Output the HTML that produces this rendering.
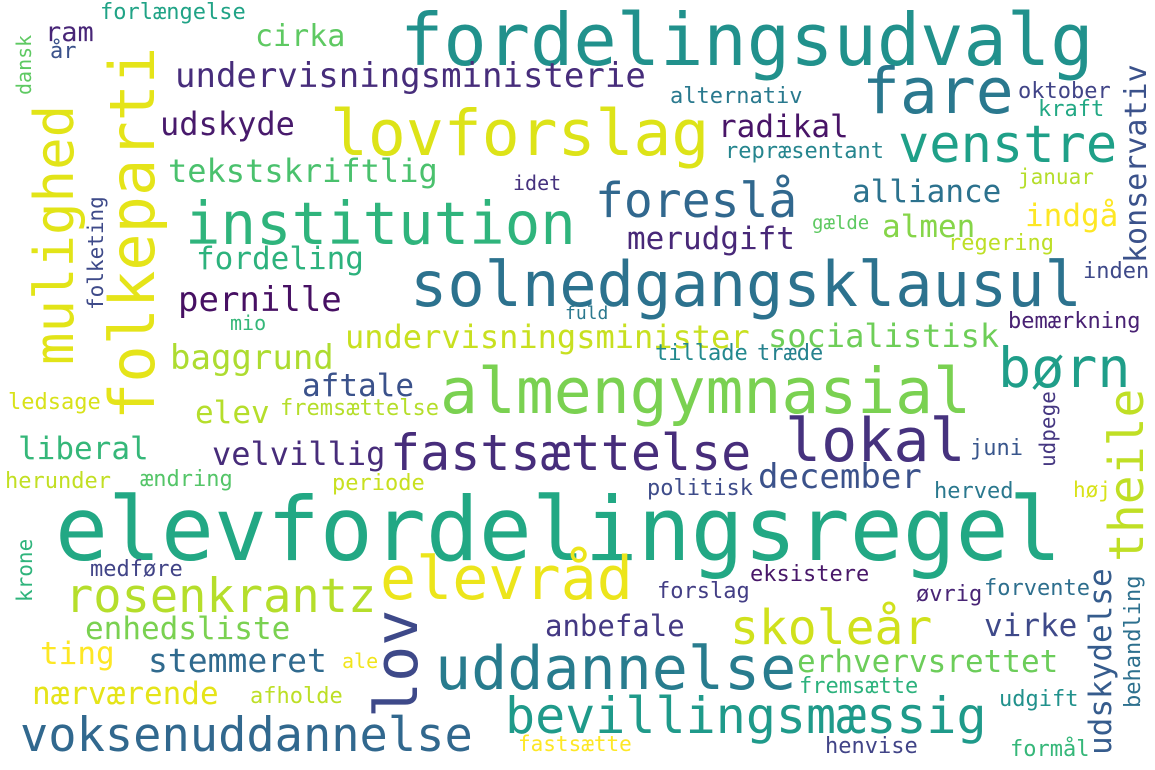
<!DOCTYPE html>
<html><head><meta charset="utf-8"><style>
html,body{margin:0;padding:0;background:#fff}
#c{position:relative;width:1155px;height:770px;overflow:hidden;background:#fff;font-family:"DejaVu Sans Mono","Liberation Mono",monospace}
#c span{position:absolute;line-height:1;white-space:nowrap}
#c span.v{transform:rotate(-90deg);transform-origin:0 0}
</style></head><body><div id="c">
<span style="left:400px;top:4px;font-size:72px;color:#21918c">fordelingsudvalg</span>
<span style="left:862px;top:60px;font-size:63px;color:#2a788e">fare</span>
<span style="left:330px;top:102px;font-size:63px;color:#dde318">lovforslag</span>
<span style="left:185px;top:194px;font-size:59px;color:#2fb47c">institution</span>
<span style="left:410px;top:254px;font-size:62px;color:#2c728e">solnedgangsklausul</span>
<span style="left:440px;top:360px;font-size:63px;color:#7ad151">almengymnasial</span>
<span style="left:785px;top:411px;font-size:60px;color:#46327e">lokal</span>
<span style="left:390px;top:428px;font-size:50px;color:#472d7b">fastsættelse</span>
<span style="left:55px;top:486px;font-size:88px;color:#22a884">elevfordelingsregel</span>
<span style="left:380px;top:549px;font-size:60px;color:#ece51b">elevråd</span>
<span style="left:100px;top:2px;font-size:22px;color:#20a386">forlængelse</span>
<span style="left:45px;top:19px;font-size:27px;color:#482677">ram</span>
<span style="left:50px;top:41px;font-size:22px;color:#3b528b">år</span>
<span style="left:255px;top:22px;font-size:30px;color:#5ec962">cirka</span>
<span style="left:175px;top:59px;font-size:34px;color:#472d7b">undervisningsministerie</span>
<span style="left:160px;top:108px;font-size:32px;color:#481a6c">udskyde</span>
<span style="left:168px;top:155px;font-size:32px;color:#4ac16d">tekstskriftlig</span>
<span style="left:513px;top:173px;font-size:20px;color:#46327e">idet</span>
<span style="left:196px;top:244px;font-size:31px;color:#2db27d">fordeling</span>
<span style="left:178px;top:283px;font-size:34px;color:#471063">pernille</span>
<span style="left:230px;top:313px;font-size:20px;color:#35b779">mio</span>
<span style="left:565px;top:305px;font-size:18px;color:#2a788e">fuld</span>
<span style="left:345px;top:321px;font-size:32px;color:#c8e020">undervisningsminister</span>
<span style="left:170px;top:341px;font-size:34px;color:#addc30">baggrund</span>
<span style="left:768px;top:320px;font-size:32px;color:#6ece58">socialistisk</span>
<span style="left:655px;top:343px;font-size:22px;color:#23898e">tillade</span>
<span style="left:757px;top:343px;font-size:22px;color:#26828e">træde</span>
<span style="left:718px;top:112px;font-size:31px;color:#481467">radikal</span>
<span style="left:725px;top:141px;font-size:22px;color:#25858e">repræsentant</span>
<span style="left:670px;top:86px;font-size:22px;color:#29798e">alternativ</span>
<span style="left:1018px;top:81px;font-size:22px;color:#414487">oktober</span>
<span style="left:1038px;top:99px;font-size:22px;color:#22a884">kraft</span>
<span style="left:898px;top:119px;font-size:52px;color:#1fa088">venstre</span>
<span style="left:595px;top:177px;font-size:48px;color:#31688e">foreslå</span>
<span style="left:852px;top:177px;font-size:31px;color:#2c728e">alliance</span>
<span style="left:1018px;top:167px;font-size:21px;color:#b5de2b">januar</span>
<span style="left:1025px;top:201px;font-size:31px;color:#fde725">indgå</span>
<span style="left:812px;top:214px;font-size:19px;color:#5ec962">gælde</span>
<span style="left:882px;top:212px;font-size:31px;color:#86d549">almen</span>
<span style="left:627px;top:224px;font-size:31px;color:#482878">merudgift</span>
<span style="left:948px;top:233px;font-size:22px;color:#bddf26">regering</span>
<span style="left:1083px;top:261px;font-size:22px;color:#3e4989">inden</span>
<span style="left:1008px;top:311px;font-size:22px;color:#482173">bemærkning</span>
<span style="left:998px;top:341px;font-size:55px;color:#1f9e89">børn</span>
<span style="left:8px;top:392px;font-size:22px;color:#d8e219">ledsage</span>
<span style="left:195px;top:398px;font-size:31px;color:#b5de2b">elev</span>
<span style="left:280px;top:398px;font-size:22px;color:#b5de2b">fremsættelse</span>
<span style="left:302px;top:371px;font-size:31px;color:#3b528b">aftale</span>
<span style="left:18px;top:434px;font-size:31px;color:#35b779">liberal</span>
<span style="left:212px;top:438px;font-size:32px;color:#472c7a">velvillig</span>
<span style="left:5px;top:471px;font-size:22px;color:#c2df23">herunder</span>
<span style="left:140px;top:469px;font-size:22px;color:#54c568">ændring</span>
<span style="left:332px;top:473px;font-size:22px;color:#c8e020">periode</span>
<span style="left:90px;top:559px;font-size:22px;color:#414487">medføre</span>
<span style="left:65px;top:573px;font-size:47px;color:#b5de2b">rosenkrantz</span>
<span style="left:85px;top:614px;font-size:31px;color:#7ad151">enhedsliste</span>
<span style="left:40px;top:639px;font-size:31px;color:#fde725">ting</span>
<span style="left:148px;top:644px;font-size:33px;color:#306a8e">stemmeret</span>
<span style="left:342px;top:651px;font-size:20px;color:#f1e51d">ale</span>
<span style="left:32px;top:679px;font-size:31px;color:#e5e419">nærværende</span>
<span style="left:250px;top:686px;font-size:22px;color:#bddf26">afholde</span>
<span style="left:20px;top:712px;font-size:47px;color:#31688e">voksenuddannelse</span>
<span style="left:435px;top:639px;font-size:60px;color:#287c8e">uddannelse</span>
<span style="left:505px;top:691px;font-size:50px;color:#1f9a8a">bevillingsmæssig</span>
<span style="left:518px;top:734px;font-size:21px;color:#fde725">fastsætte</span>
<span style="left:730px;top:604px;font-size:48px;color:#d0e11c">skoleår</span>
<span style="left:545px;top:612px;font-size:29px;color:#443983">anbefale</span>
<span style="left:657px;top:581px;font-size:22px;color:#433e85">forslag</span>
<span style="left:750px;top:564px;font-size:22px;color:#481769">eksistere</span>
<span style="left:647px;top:478px;font-size:22px;color:#3e4c8a">politisk</span>
<span style="left:758px;top:460px;font-size:34px;color:#3b528b">december</span>
<span style="left:970px;top:438px;font-size:22px;color:#39568c">juni</span>
<span style="left:934px;top:481px;font-size:22px;color:#2a788e">herved</span>
<span style="left:1073px;top:480px;font-size:21px;color:#d8e219">høj</span>
<span style="left:916px;top:584px;font-size:22px;color:#482475">øvrig</span>
<span style="left:984px;top:578px;font-size:22px;color:#2e6f8e">forvente</span>
<span style="left:984px;top:611px;font-size:31px;color:#3e4989">virke</span>
<span style="left:797px;top:647px;font-size:31px;color:#6ccd5a">erhvervsrettet</span>
<span style="left:799px;top:676px;font-size:22px;color:#2db27d">fremsætte</span>
<span style="left:999px;top:689px;font-size:22px;color:#21918c">udgift</span>
<span style="left:825px;top:736px;font-size:22px;color:#414487">henvise</span>
<span style="left:1010px;top:739px;font-size:22px;color:#35b779">formål</span>
<span class="v" style="left:102px;top:420px;font-size:62px;color:#e5e419">folkeparti</span>
<span class="v" style="left:28px;top:365px;font-size:54px;color:#e2e418">mulighed</span>
<span class="v" style="left:14px;top:95px;font-size:20px;color:#5ec962">dansk</span>
<span class="v" style="left:86px;top:310px;font-size:21px;color:#3e4a89">folketing</span>
<span class="v" style="left:1122px;top:263px;font-size:30px;color:#3b528b">konservativ</span>
<span class="v" style="left:15px;top:602px;font-size:21px;color:#2fb47c">krone</span>
<span class="v" style="left:367px;top:718px;font-size:60px;color:#3e4989">lov</span>
<span class="v" style="left:1038px;top:467px;font-size:21px;color:#453781">udpege</span>
<span class="v" style="left:1103px;top:562px;font-size:48px;color:#c0df25">theile</span>
<span class="v" style="left:1086px;top:755px;font-size:31px;color:#365c8d">udskydelse</span>
<span class="v" style="left:1123px;top:708px;font-size:22px;color:#2d708e">behandling</span>
</div></body></html>
